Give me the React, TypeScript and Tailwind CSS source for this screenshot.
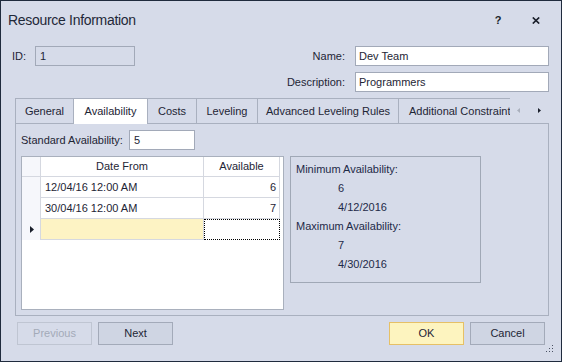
import React from 'react';

const tabs = [
  { name: 'General', w: 'w-[58px]' },
  { name: 'Availability', w: 'w-[74px]', active: true },
  { name: 'Costs', w: 'w-[49px]' },
  { name: 'Leveling', w: 'w-[61px]' },
  { name: 'Advanced Leveling Rules', w: 'w-[141px]' },
];

const rows = [
  { date: '12/04/16 12:00 AM', value: '6' },
  { date: '30/04/16 12:00 AM', value: '7' },
];

const App = () => {
  return (
    <div className="w-[562px] h-[362px] bg-[#d6dbe9] border border-[#1f2b3d] flex flex-col relative text-[11px] text-[#1e2535] [font-family:'Liberation_Sans',Arial,sans-serif]">
      {/* Title bar */}
      <div className="h-[39px] flex items-center pl-[7px] pr-[15px]">
        <span className="text-[14px] tracking-[-0.3px] text-[#1f2838]">Resource Information</span>
        <div className="ml-auto flex items-center">
          <span className="w-[20px] text-center font-bold text-[11px] text-[#1a1f2b]">?</span>
          <div className="w-[20px] ml-[18px] flex justify-center">
            <svg width="8" height="7" viewBox="0 0 8 7">
              <path d="M0.8 0.5 L7.2 6.5 M7.2 0.5 L0.8 6.5" stroke="#1a1f2b" strokeWidth="1.7" />
            </svg>
          </div>
        </div>
      </div>

      {/* Header fields */}
      <div className="mt-[6px] h-[20px] flex items-center pl-[11px] pr-[12px]">
        <span className="w-[23px]">ID:</span>
        <div className="w-[100px] h-[20px] border border-[#a2a9b8] flex items-center pl-[4px]">1</div>
        <span className="ml-auto pr-[10px]">Name:</span>
        <div className="w-[194px] h-[20px] border border-[#a2a9b8] bg-white flex items-center pl-[3px]">Dev Team</div>
      </div>
      <div className="mt-[6px] h-[20px] flex items-center pr-[12px]">
        <span className="ml-auto pr-[10px]">Description:</span>
        <div className="w-[194px] h-[20px] border border-[#a2a9b8] bg-white flex items-center pl-[3px]">Programmers</div>
      </div>

      {/* Tabs */}
      <div className="mt-[6px] ml-[14px] mr-[12px] flex flex-col">
        <div className="h-[25px] flex items-start">
          {tabs.map((t) => (
            <div
              key={t.name}
              className={`${t.w} border-t border-l border-[#a9b0bf] flex items-center justify-center whitespace-nowrap ${
                t.active ? 'h-[26px] bg-white relative z-10' : 'h-[25px]'
              }`}
            >
              {t.name}
            </div>
          ))}
          <div className="w-[112px] h-[25px] border-t border-l border-[#a9b0bf] flex items-center pl-[10px] overflow-hidden whitespace-nowrap">
            Additional Constraints
          </div>
          <div className="flex-1 h-[25px] flex items-center pl-[7px]">
            <svg width="3" height="5" viewBox="0 0 3 5">
              <path d="M3 0 L0 2.5 L3 5 Z" fill="#a9afbc" />
            </svg>
            <svg width="3" height="5" viewBox="0 0 3 5" className="ml-[18px]">
              <path d="M0 0 L3 2.5 L0 5 Z" fill="#1a1f2b" />
            </svg>
          </div>
        </div>

        <div className="h-[193px] border border-[#a9b0bf] flex flex-col pl-[5px] pt-[6px]">
          <div className="h-[20px] flex items-center">
            <span className="w-[108px]">Standard Availability:</span>
            <div className="w-[66px] h-[20px] border border-[#a2a9b8] bg-white flex items-center pl-[4px]">5</div>
          </div>

          <div className="mt-[6px] flex items-start">
            {/* Grid */}
            <div className="w-[263px] h-[154px] bg-white border border-[#a9b0bd] flex flex-col">
              <div className="h-[20px] flex">
                <div className="w-[19px] border-r border-b border-[#d5d8e0] bg-[#f6f7fb]" />
                <div className="w-[163px] border-r border-b border-[#d5d8e0] flex items-center justify-center">Date From</div>
                <div className="w-[76px] border-r border-b border-[#d5d8e0] flex items-center justify-center">Available</div>
              </div>
              {rows.map((r) => (
                <div key={r.date} className="h-[21px] flex">
                  <div className="w-[19px] border-r border-[#d5d8e0] bg-[#f6f7fb]" />
                  <div className="w-[163px] border-r border-b border-[#d5d8e0] flex items-center pl-[4px]">{r.date}</div>
                  <div className="w-[76px] border-r border-b border-[#d5d8e0] flex items-center justify-end pr-[3px]">{r.value}</div>
                </div>
              ))}
              <div className="h-[21px] flex">
                <div className="w-[19px] border-r border-[#d5d8e0] bg-[#f6f7fb] flex items-center pl-[8px]">
                  <svg width="4" height="7" viewBox="0 0 4 7">
                    <path d="M0 0 L4 3.5 L0 7 Z" fill="#1a1f2b" />
                  </svg>
                </div>
                <div className="w-[163px] border-r border-b border-[#d5d8e0] bg-[#fdf3c4]" />
                <div className="w-[76px] border border-dotted border-black" />
              </div>
            </div>

            {/* Summary group */}
            <div className="ml-[6px] w-[191px] h-[127px] border border-[#a0a8b6] pl-[5px] pt-[3px] flex flex-col text-[#1e2a48]">
              <div className="h-[19px] leading-[19px]">Minimum Availability:</div>
              <div className="h-[19px] leading-[19px] pl-[42px]">6</div>
              <div className="h-[19px] leading-[19px] pl-[42px]">4/12/2016</div>
              <div className="h-[19px] leading-[19px]">Maximum Availability:</div>
              <div className="h-[19px] leading-[19px] pl-[42px]">7</div>
              <div className="h-[19px] leading-[19px] pl-[42px]">4/30/2016</div>
            </div>
          </div>
        </div>
      </div>

      {/* Buttons */}
      <div className="mt-[6px] h-[23px] flex px-[16px]">
        <button className="w-[75px] h-[23px] border border-[#bfc5d2] text-[#a3aab8]">Previous</button>
        <button className="ml-[6px] w-[75px] h-[23px] border border-[#a3aab9] bg-[#cfd5e3]">Next</button>
        <button className="ml-auto w-[75px] h-[23px] border border-[#e6c066] bg-[#fdf4bf]">OK</button>
        <button className="ml-[6px] w-[75px] h-[23px] border border-[#a3aab9] bg-[#cfd5e3]">Cancel</button>
      </div>

      {/* Size grip */}
      <svg width="8" height="8" viewBox="0 0 8 8" className="absolute right-[7px] bottom-[8px]">
        <rect x="6" y="0" width="1" height="1" fill="#4a5062" />
        <rect x="3" y="3" width="1" height="1" fill="#4a5062" />
        <rect x="6" y="3" width="1" height="1" fill="#4a5062" />
        <rect x="0" y="6" width="1" height="1" fill="#4a5062" />
        <rect x="3" y="6" width="1" height="1" fill="#4a5062" />
        <rect x="6" y="6" width="1" height="1" fill="#4a5062" />
      </svg>
    </div>
  );
};

export default App;
